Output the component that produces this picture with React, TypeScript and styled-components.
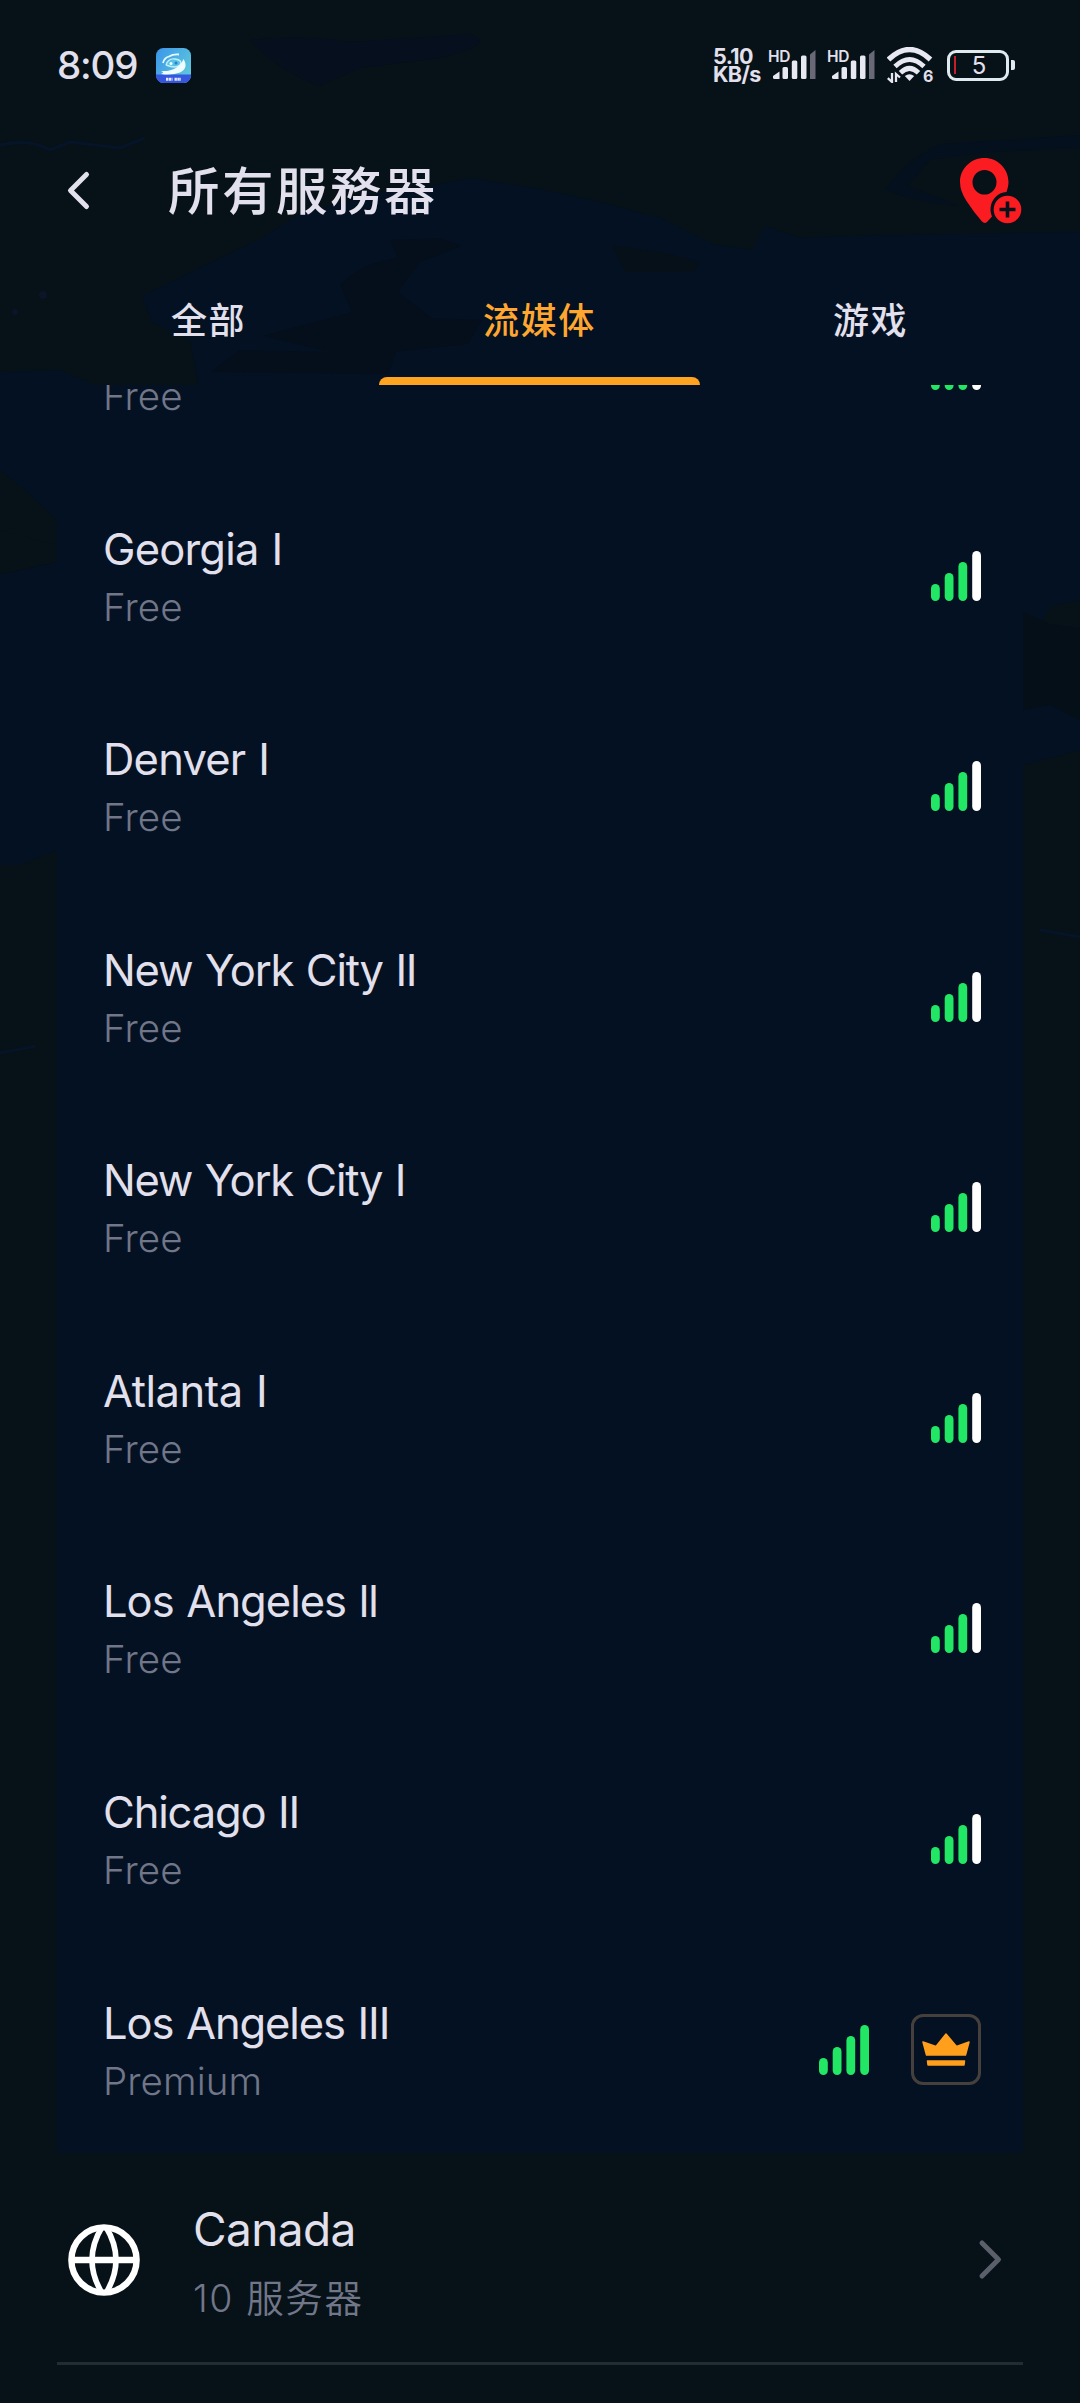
import React from 'react';
import styled, { createGlobalStyle } from 'styled-components';

const GlobalStyle = createGlobalStyle`
  * { box-sizing: border-box; }
  body { margin: 0; background: #061118; }
`;

const NAVY = '#031122';

const Screen = styled.div`
  position: relative;
  width: 1080px;
  height: 2403px;
  overflow: hidden;
  display: flex;
  flex-direction: column;
  background: #061118;
  color: #e2e0ec;
  font-family: Inter, 'Noto Sans CJK SC', sans-serif;
`;

const MapArt = styled.svg`
  position: absolute;
  top: 0;
  left: 0;
`;

const StatusBar = styled.header`
  position: relative;
  display: flex;
  align-items: center;
  height: 130px;
  padding: 0 65px 0 57px;
`;

const Clock = styled.time`
  width: 99px;
  font-size: 38.5px;
  font-weight: 500;
  line-height: 44px;
  letter-spacing: -1.2px;
  white-space: nowrap;
`;

const StatusIcons = styled.div`
  display: flex;
  align-items: center;
  margin-left: auto;
`;

const NetSpeed = styled.div`
  width: 56px;
  display: flex;
  flex-direction: column;
  font-size: 21.5px;
  font-weight: 700;
  line-height: 18px;
  letter-spacing: -0.6px;
  white-space: nowrap;
`;

const HdSignal = styled.div`
  display: flex;
  width: 59px;
  height: 30px;
`;

const HdLabel = styled.span`
  width: 23px;
  margin: -2px -18px 0 -1px;
  font-size: 15.5px;
  line-height: 17px;
  font-weight: 600;
  letter-spacing: -0.3px;
`;

const WifiBox = styled.div`
  position: relative;
  display: flex;
  width: 60px;
`;

const WifiGen = styled.span`
  position: absolute;
  left: 36px;
  top: 21px;
  font-size: 16px;
  line-height: 17px;
  font-weight: 700;
`;

const Battery = styled.div`
  display: flex;
  align-items: center;
  gap: 2px;
`;

const BatteryShell = styled.div`
  display: flex;
  align-items: center;
  width: 62px;
  height: 31px;
  padding-left: 4px;
  border: 3px solid #dfeaee;
  border-radius: 9px;
  font-size: 24px;
  line-height: 25px;
`;

const BatteryLevel = styled.i`
  width: 2px;
  height: 18px;
  background: #c3202c;
`;

const BatteryText = styled.span`
  flex: 1;
  padding-right: 4px;
  text-align: center;
`;

const BatteryTip = styled.i`
  width: 4px;
  height: 10px;
  border-radius: 0 2px 2px 0;
  background: #dfeaee;
`;

const TitleBar = styled.div`
  position: relative;
  display: flex;
  align-items: center;
  height: 122px;
  padding: 0 58px 0 57px;
`;

const Title = styled.h1`
  flex: 1;
  margin: 0 0 0 76px;
  padding-bottom: 6px;
  font-family: 'Noto Sans CJK TC', 'Noto Sans CJK SC', sans-serif;
  font-size: 51.5px;
  font-weight: 500;
  line-height: 70px;
  letter-spacing: 2.5px;
`;

const Tabs = styled.nav`
  position: relative;
  display: grid;
  grid-template-columns: repeat(3, 321px);
  column-gap: 10px;
  justify-content: center;
  padding: 0 1px 0 0;
  height: 133px;
`;

const Tab = styled.button<{ $active?: boolean }>`
  display: flex;
  flex-direction: column;
  align-items: center;
  justify-content: flex-end;
  padding: 0;
  border: 0;
  background: none;
  color: ${p => (p.$active ? '#ffa630' : '#e2e0ec')};
  font-family: 'Noto Sans CJK SC', sans-serif;
  font-size: 36px;
  font-weight: 500;
  line-height: 52px;
  letter-spacing: 1.6px;

  &::after {
    content: '';
    width: 100%;
    height: 8px;
    margin-top: 33px;
    border-radius: 8px 8px 0 0;
    background: ${p => (p.$active ? '#ffa420' : 'transparent')};
  }
`;

const Scroller = styled.main`
  position: relative;
  flex: 1;
  overflow: hidden;
  padding: 0 57px;
`;

const ServerList = styled.ul`
  margin: -127.4px 0 0;
  padding: 0;
  list-style: none;
  background: ${NAVY};
`;

const ServerRow = styled.li`
  display: flex;
  align-items: center;
  gap: 42px;
  height: 210.6px;
  padding: 4px 42px 0 46px;
`;

const ServerText = styled.div`
  flex: 1;
  display: flex;
  flex-direction: column;
  padding-top: 3px;
`;

const ServerName = styled.span<{ $tracking: number }>`
  font-size: 43.5px;
  line-height: 58px;
  letter-spacing: ${p => p.$tracking}px;
  word-spacing: 1.5px;
  white-space: pre;
`;

const ServerTier = styled.span`
  margin-top: 1px;
  font-size: 38.5px;
  font-weight: 350;
  line-height: 56px;
  letter-spacing: 0.1px;
  color: #717688;
`;

const PremiumBadge = styled.span`
  display: flex;
  align-items: center;
  justify-content: center;
  width: 70px;
  height: 71px;
  border: 3px solid #46403d;
  border-radius: 12px;
`;

const CountryRow = styled.section`
  display: flex;
  align-items: center;
  height: 212px;
  padding: 6px 19px 0 10px;
  border-bottom: 3px solid #222c35;
`;

const CountryText = styled.div`
  flex: 1;
  display: flex;
  flex-direction: column;
  padding: 7px 0 0 52px;
`;

const CountryName = styled.span`
  font-size: 46px;
  line-height: 64px;
  letter-spacing: -0.6px;
`;

const CountryCount = styled.span`
  margin-top: 6px;
  font-size: 37.5px;
  font-weight: 350;
  line-height: 64px;
  color: #717688;
  letter-spacing: 1.6px;
`;

const Bars = ({ full }: { full?: boolean }) => (
  <svg width="50" height="50" viewBox="0 0 50 50">
    <rect x="0" y="33" width="8.8" height="17" rx="4.4" fill="#22e765" />
    <rect x="13.7" y="22" width="8.8" height="28" rx="4.4" fill="#22e765" />
    <rect x="27.4" y="11" width="8.8" height="39" rx="4.4" fill="#22e765" />
    <rect x="41.2" y="0" width="8.8" height="50" rx="4.4" fill={full ? '#22e765' : '#fff'} />
  </svg>
);

const CellBars = () => (
  <svg width="43" height="29" viewBox="0 0 43 29" fill="#e8e8f2">
    <path d="M0 26 6.5 21.5V29H1.5Q0 29 0 27.5Z" />
    <rect x="9.5" y="17" width="5.5" height="12" rx="1.5" />
    <rect x="18.8" y="10.5" width="5.5" height="18.5" rx="1.5" />
    <rect x="28" y="5.5" width="5.5" height="23.5" rx="1.5" />
    <path d="M37 4.5 42.5 0V29H37Z" fill="#696876" />
  </svg>
);

const Wifi = () => (
  <svg width="46" height="36" viewBox="0 0 46 36" fill="none" stroke="#e8e8f2">
    <path d="M1.5 12.5Q22.5 -7.5 43.5 12.5" strokeWidth="5.2" />
    <path d="M8 19.5Q22.5 5.5 37 19.5" strokeWidth="4.8" />
    <path d="M13.5 25.8Q22.5 17 31.5 25.8" strokeWidth="4.8" />
    <path d="M22.5 34 17.8 29Q22.5 25.5 27.2 29Z" fill="#e8e8f2" stroke="none" />
    <path d="M5 26v9L0.8 31.2M9 35v-8l4 3.5" strokeWidth="2.3" />
  </svg>
);

const AppBadge = () => (
  <svg width="35" height="35" viewBox="0 0 35 35">
    <defs>
      <linearGradient id="badge" x1="0" y1="0" x2="1" y2="0.6">
        <stop offset="0" stopColor="#3b95ea" />
        <stop offset="1" stopColor="#5cc5dc" />
      </linearGradient>
      <clipPath id="round"><rect width="35" height="35" rx="7.5" /></clipPath>
    </defs>
    <g clipPath="url(#round)">
      <rect width="35" height="35" fill="url(#badge)" />
      <rect y="26.5" width="35" height="9" fill="#3556dd" />
      <path d="M7 15Q8 10 13 8.5 17 6 23 6.5" fill="none" stroke="#e4fbff" strokeWidth="1.8" />
      <path d="M10 17Q12 10 19 11 27 12 24 17 20 21 10 17" fill="#58c3e6" stroke="#bdf0fa" strokeWidth="1.4" />
      <path d="M5 23Q22 24 27.5 11 33 20 24 24.5 16 27.5 5 26 9 24.5 5 23Z" fill="#effdff" />
      <circle cx="15" cy="15.5" r="1.5" fill="#f4ffff" />
      <circle cx="20" cy="15" r="1.5" fill="#2e7fcb" />
      <path d="M10 31.3h6.5M18.5 31.3h6.5" stroke="#dfe6ff" strokeWidth="3" strokeDasharray="2.4 .5" />
    </g>
  </svg>
);

const Chevron = ({ flip, color }: { flip?: boolean; color: string }) => (
  <svg width="35" height="44" viewBox="0 0 35 44" fill="none" stroke={color} strokeWidth="5" strokeLinecap="round" strokeLinejoin="round">
    <path d={flip ? 'M29.5 5.5 13.5 21.5 29.5 37.5' : 'M13 5 29.5 21.5 13 38'} />
  </svg>
);

const PinAdd = () => (
  <svg width="62" height="66" viewBox="0 0 62 66" fill="#fb1c22">
    <path
      fillRule="evenodd"
      d="M24.5 0C37.5 0 48.5 10.5 48.5 24C48.5 27.5 47.6 30.8 46.5 34C37.5 34.5 30.5 42 30.5 51.5C30.5 54 31 56.3 32 58.5L27 64Q24.5 66 22 63.5Q14 54.5 6.5 43Q0 33 0 24C0 10.5 11 0 24.5 0ZM24.5 12A12 12.3 0 1 0 24.5 36.6A12 12.3 0 1 0 24.5 12Z"
    />
    <circle cx="47.5" cy="51.5" r="13.8" />
    <path d="M47.5 43.5v16M39.5 51.5h16" stroke="#0b111a" strokeWidth="3.6" />
  </svg>
);

const Crown = () => (
  <svg width="48" height="33" viewBox="0 0 48 33" fill="#ff9f1c" stroke="#ff9f1c" strokeLinejoin="round" strokeWidth="1.5">
    <path d="M1 9 14 13.5 24 1 34.5 13.5 47 9 43.5 22H4.5Z" />
    <path d="M5.500 28H42.500L42 32H6Z" />
  </svg>
);

const Globe = () => (
  <svg width="74" height="74" viewBox="0 0 74 74" fill="none" stroke="#fff" strokeWidth="6.4">
    <circle cx="37" cy="37" r="32.6" />
    <path d="M4 37h66" />
    <path d="M35 4Q15 37 35 70M39 4Q59 37 39 70" strokeWidth="5.6" />
  </svg>
);

const Backdrop = () => (
  <MapArt width="1080" height="2403" viewBox="0 0 1080 2403" fill={NAVY}>
    <path d="M250 40Q300 34 350 42L470 34Q500 44 440 58L360 68 320 86Q280 72 250 40Z" fill="#050f1d" />
    <path d="M0 145Q30 138 50 150L70 142 120 148 145 138" fill="none" stroke="#06142a" strokeWidth="3" />
    <path d="M142 296 200 268 262 238 300 214 380 192 430 186 470 178 545 190 600 202 660 218 712 244 752 250 765 226 800 238 850 236 1080 232V600L1050 606 1023 660 1080 690V750L1023 765V850H0V575L57 562V520L25 490 0 470V372L60 370 100 388 200 392 190 340 152 322Z" />
    <path d="M0 620h57V850L20 865H0Z" />
    <path d="M885 190Q905 160 940 144L1080 135V148L990 152 930 160 908 186 960 206Q920 204 885 190Z" fill="#04101e" />
    <path d="M340 285Q362 262 398 258L390 240 440 238 462 246 420 262 398 292 432 318 482 320 468 344 396 352 388 374 210 372 240 350 330 352 262 336 352 312Z" fill="#050f1b" />
    <path d="M612 245 662 252 700 262 694 272 625 272Z" fill="#061019" />
    <path d="M0 530 57 545V562L0 574Z" fill="#061118" />
    <path d="M1023 612 1050 624 1080 628V720L1050 705 1023 710Z" fill="#050f18" />
    <path d="M0 1053 36 1046M1040 930l40 7" stroke="#061428" strokeWidth="3" />
    <circle cx="43" cy="295" r="4" fill="#0a1528" />
    <circle cx="15" cy="312" r="3" fill="#0a1528" />
  </MapArt>
);

const servers = [
  { name: '', tier: 'Free', tracking: 0 },
  { name: 'Georgia I', tier: 'Free', tracking: -0.8 },
  { name: 'Denver I', tier: 'Free', tracking: -0.8 },
  { name: 'New York City II', tier: 'Free', tracking: -1.2 },
  { name: 'New York City I', tier: 'Free', tracking: -1.25 },
  { name: 'Atlanta I', tier: 'Free', tracking: -0.45 },
  { name: 'Los Angeles ll', tier: 'Free', tracking: -1 },
  { name: 'Chicago II', tier: 'Free', tracking: -1.15 },
  { name: 'Los Angeles III', tier: 'Premium', tracking: -1.1 },
];

export default function App() {
  return (
    <Screen>
      <GlobalStyle />
      <Backdrop />
      <StatusBar>
        <Clock>8:09</Clock>
        <AppBadge />
        <StatusIcons>
          <NetSpeed><span>5.10</span><span>KB/s</span></NetSpeed>
          <HdSignal><HdLabel>HD</HdLabel><CellBars /></HdSignal>
          <HdSignal><HdLabel>HD</HdLabel><CellBars /></HdSignal>
          <WifiBox><Wifi /><WifiGen>6</WifiGen></WifiBox>
          <Battery>
            <BatteryShell><BatteryLevel /><BatteryText>5</BatteryText></BatteryShell>
            <BatteryTip />
          </Battery>
        </StatusIcons>
      </StatusBar>
      <TitleBar>
        <Chevron flip color="#e2e0ec" />
        <Title>所有服務器</Title>
        <PinAdd />
      </TitleBar>
      <Tabs>
        <Tab>全部</Tab>
        <Tab $active>流媒体</Tab>
        <Tab>游戏</Tab>
      </Tabs>
      <Scroller>
        <ServerList>
          {servers.map((s, i) => (
            <ServerRow key={i}>
              <ServerText>
                <ServerName $tracking={s.tracking}>{s.name || ' '}</ServerName>
                <ServerTier>{s.tier}</ServerTier>
              </ServerText>
              <Bars full={s.tier === 'Premium'} />
              {s.tier === 'Premium' && <PremiumBadge><Crown /></PremiumBadge>}
            </ServerRow>
          ))}
        </ServerList>
        <CountryRow>
          <Globe />
          <CountryText>
            <CountryName>Canada</CountryName>
            <CountryCount>10 服务器</CountryCount>
          </CountryText>
          <Chevron color="#5b5f6a" />
        </CountryRow>
      </Scroller>
    </Screen>
  );
}
